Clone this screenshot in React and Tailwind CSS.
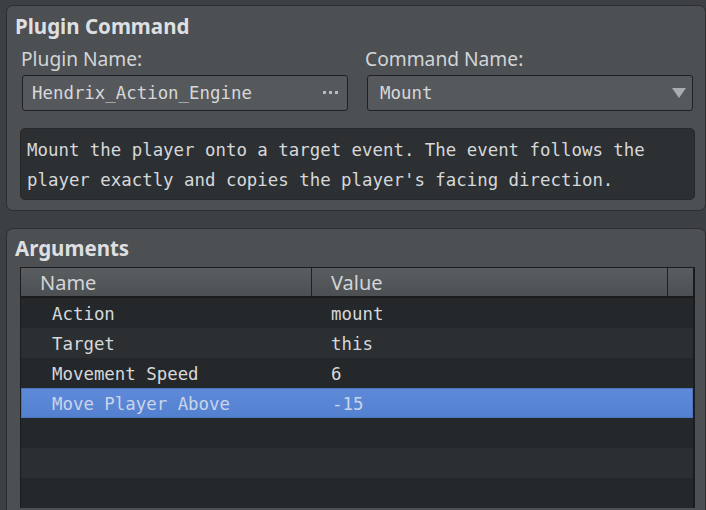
import React from 'react';

const mono = { fontFamily: '"DejaVu Sans Mono", "Liberation Mono", monospace' };
const sans = { fontFamily: '"Noto Sans", "Open Sans", sans-serif' };

const args = [
  { name: 'Action', value: 'mount' },
  { name: 'Target', value: 'this' },
  { name: 'Movement Speed', value: '6' },
  { name: 'Move Player Above', value: '-15', selected: true },
  { name: '', value: '' },
  { name: '', value: '' },
  { name: '', value: '' },
];

function Field({ label, children }) {
  return (
    <div className="flex flex-col">
      <div className="h-[26px] text-[19.2px] leading-[26px] text-[#d2d4d6]" style={sans}>
        {label}
      </div>
      {children}
    </div>
  );
}

export default function App() {
  return (
    <div className="w-[706px] h-[510px] overflow-hidden bg-[#3d4043] pl-[6px] pt-[5px]">
      {/* Plugin command group */}
      <div className="w-[700px] h-[206px] rounded-[7px] border border-[#2c2e30] bg-[#4d5053] pl-[8px] pt-[7px]">
        <div className="h-[26px] text-[20.5px] font-bold leading-[26px] text-[#dedfe0]" style={sans}>
          Plugin Command
        </div>
        <div className="mt-[7px] flex gap-[17px] pl-[6px]">
          <Field label="Plugin Name:">
            <div className="mt-[3px] ml-[1px] flex h-[36px] w-[326px] items-center justify-between rounded-[3px] border border-[#1f2123] bg-[#56595c] pl-[9px] pr-[9px]">
              <span className="text-[17.4px] text-[#d6d8da]" style={mono}>Hendrix_Action_Engine</span>
              <span className="flex gap-[3px] pb-[1px]">
                <span className="h-[3px] w-[3px] bg-[#b8bbbe]" />
                <span className="h-[3px] w-[3px] bg-[#b8bbbe]" />
                <span className="h-[3px] w-[3px] bg-[#b8bbbe]" />
              </span>
            </div>
          </Field>
          <Field label="Command Name:">
            <div className="mt-[3px] ml-[2px] flex h-[36px] w-[326px] items-center justify-between rounded-[3px] border border-[#1f2123] bg-[#56595c] pl-[12px] pr-[6px]">
              <span className="text-[17.4px] text-[#d6d8da]" style={mono}>Mount</span>
              <svg width="14" height="11" viewBox="0 0 14 11">
                <path d="M0 0 L14 0 L7 10 Z" fill="#a9adb1" />
              </svg>
            </div>
          </Field>
        </div>
        <div className="mt-[17px] ml-[5px] h-[72px] w-[675px] rounded-[5px] border border-[#26282a] bg-[#2d3033] pl-[6px] pt-[6px] text-[17.4px] leading-[30px] text-[#d6d8da]" style={mono}>
          <div>Mount the player onto a target event. The event follows the</div>
          <div>player exactly and copies the player's facing direction.</div>
        </div>
      </div>

      {/* Arguments group */}
      <div className="mt-[17px] w-[700px] h-[300px] rounded-t-[7px] border border-[#2c2e30] bg-[#4d5053] pl-[8px] pt-[6px]">
        <div className="h-[26px] text-[20.5px] font-bold leading-[26px] text-[#dedfe0]" style={sans}>
          Arguments
        </div>
        <div className="mt-[6px] ml-[5px] w-[675px] border-t border-l border-r-2 border-[#1a1c1e] bg-[#25282b]">
          <div className="flex h-[30px] border-b-2 border-[#1a1c1e] bg-gradient-to-b from-[#5b5e61] to-[#4d5053] text-[20px] leading-[28px] text-[#d2d4d6]" style={sans}>
            <div className="w-[291px] border-r border-[#1e2022] pl-[19px] pt-[1px]">Name</div>
            <div className="w-[356px] border-r border-[#1e2022] pl-[19px] pt-[1px]">Value</div>
            <div className="flex-1" />
          </div>
          {args.map((a, i) => (
            <div
              key={i}
              className={
                a.selected
                  ? 'flex h-[30px] border border-[#4a74bb] bg-gradient-to-b from-[#5e8ad9] to-[#5480d0] pt-[1px] text-[17.4px] leading-[28px] text-[#c9d5ea]'
                  : i % 2 === 0
                  ? 'flex h-[30px] bg-[#25282b] pt-[2px] text-[17.4px] leading-[28px] text-[#d6d8da]'
                  : 'flex h-[30px] bg-[#2c2f32] pt-[2px] text-[17.4px] leading-[28px] text-[#d6d8da]'
              }
              style={mono}
            >
              <div className={a.selected ? 'w-[291px] pl-[30px]' : 'w-[291px] pl-[31px]'}>{a.name}</div>
              <div className="pl-[19px]">{a.value}</div>
            </div>
          ))}
        </div>
      </div>
    </div>
  );
}
